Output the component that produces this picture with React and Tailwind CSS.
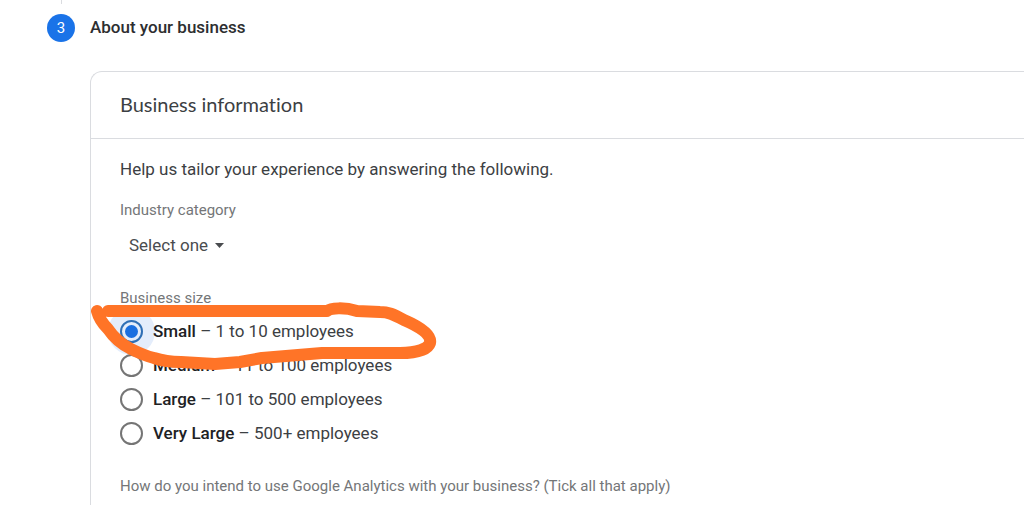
import React from "react";

const sizes = [
  { id: "small", name: "Small", detail: "1 to 10 employees" },
  { id: "medium", name: "Medium", detail: "11 to 100 employees" },
  { id: "large", name: "Large", detail: "101 to 500 employees" },
  { id: "very-large", name: "Very Large", detail: "500+ employees" },
];

function SizeOption({ option }) {
  return (
    <div className="flex h-[34px] items-center gap-2.5">
      <input
        type="radio"
        id={option.id}
        name="business-size"
        defaultChecked={option.id === "small"}
        className="m-0 grid size-[23px] shrink-0 appearance-none place-items-center rounded-full border-2 border-[#757575] before:size-[13px] before:rounded-full checked:border-[#2f6fb5] checked:shadow-[0_0_0_12px_#e4edfb] checked:bg-[#e4edfb] checked:before:bg-[#1a6fe0]"
      />
      <label htmlFor={option.id} className="relative text-[17px] leading-6">
        <span className="font-medium text-[#202124]">{option.name}</span> – {option.detail}
      </label>
    </div>
  );
}

function Highlight() {
  return (
    <svg
      className="pointer-events-none absolute -left-10 -top-[13px] h-20 w-[360px]"
      viewBox="80 295 360 80"
      fill="none"
      aria-hidden="true"
    >
      <path
        d="M97 311C99 319 103 324 108 329C114 338 121 344 131 349C139 353 146 356 154 358C163 361 172 362 181 362L215 364L240 362L262 358L322 353H400C417 353 428 349 430 343C432 334 418 326 404 320C393 314 388 312 380 312L357 311C344 307 331 308 327 311H108"
        stroke="#ff7427"
        strokeWidth="12"
        strokeLinecap="round"
        strokeLinejoin="round"
      />
    </svg>
  );
}

export default function App() {
  return (
    <main className="h-screen overflow-hidden bg-white font-['Roboto',sans-serif] text-[#3c4043]">
      <div className="ml-[61px] h-1 w-px bg-[#dadce0]" />
      <header className="flex items-start gap-[15px] pl-[47px] pt-2.5">
        <span className="flex size-7 items-center justify-center rounded-full bg-[#1a73e8] text-[15px] text-white">
          3
        </span>
        <h1 className="text-[17px] font-medium leading-[26px] text-[#2d2e30]">About your business</h1>
      </header>

      <section className="ml-[90px] mt-[29px] rounded-tl-xl border-l border-t border-[#dadce0] pb-10">
        <h2 className="border-b border-[#dadce0] px-[29px] pb-5 pt-[19px] font-['Lato',sans-serif] text-xl leading-[27px] text-[#3c4043] [font-variant-ligatures:none]">
          Business information
        </h2>
        <form className="px-[29px] pt-[18px]">
          <p className="text-[17px] leading-6">Help us tailor your experience by answering the following.</p>

          <label htmlFor="industry" className="mt-[19px] block text-[15px] leading-5 text-[#747678]">
            Industry category
          </label>
          <div className="mt-[13px] flex items-center pl-2">
            <select
              id="industry"
              className="w-[87px] appearance-none bg-transparent pl-px text-[17px] leading-6 text-[#4a4c4f]"
            >
              <option>Select one</option>
            </select>
            <svg className="pointer-events-none h-[5px] w-[9px]" viewBox="0 0 9 5" aria-hidden="true">
              <path d="M0 0H9L4.5 5Z" fill="#4a4c4f" />
            </svg>
          </div>

          <fieldset className="mt-[31px]">
            <legend className="text-[15px] leading-5 text-[#747678]">Business size</legend>
            <div className="relative pt-1.5">
              {sizes.map((option) => (
                <SizeOption key={option.id} option={option} />
              ))}
              <Highlight />
            </div>
          </fieldset>

          <p className="mt-[26px] text-[15px] leading-5 text-[#747678]">
            How do you intend to use Google Analytics with your business? (Tick all that apply)
          </p>
        </form>
      </section>
    </main>
  );
}
